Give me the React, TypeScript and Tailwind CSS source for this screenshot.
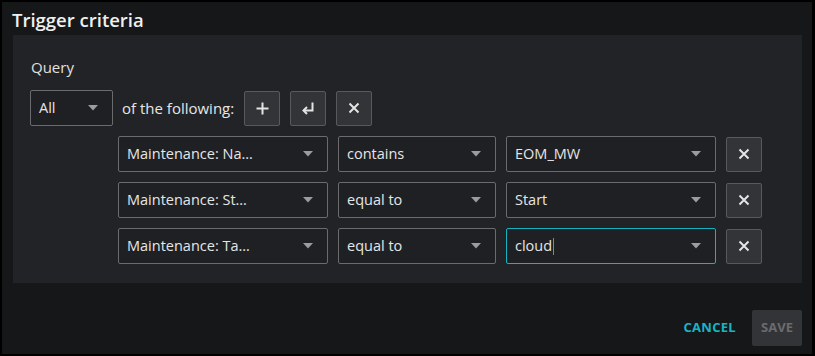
import React from "react";

const font = { fontFamily: '"Open Sans", "Noto Sans", sans-serif' };

function Caret() {
  return (
    <svg width="10" height="6" viewBox="0 0 10 6" className="shrink-0">
      <path d="M0 0 H10 L5 5.5 Z" fill="#9b9c9e" />
    </svg>
  );
}

function XIcon() {
  return (
    <svg width="12" height="12" viewBox="0 0 12 12">
      <path d="M1.5 1.5 L10.5 10.5 M10.5 1.5 L1.5 10.5" stroke="#e4e4e4" strokeWidth="2" strokeLinecap="butt" />
    </svg>
  );
}

function PlusIcon() {
  return (
    <svg width="13" height="13" viewBox="0 0 13 13">
      <path d="M6.5 0.5 V12.5 M0.5 6.5 H12.5" stroke="#e4e4e4" strokeWidth="2" />
    </svg>
  );
}

function ReturnIcon() {
  return (
    <svg width="14" height="13" viewBox="0 0 14 13">
      <path d="M11.5 0.5 V8.5 H3" stroke="#e4e4e4" strokeWidth="2" fill="none" />
      <path d="M6 5 L2.5 8.5 L6 12" stroke="#e4e4e4" strokeWidth="2" fill="none" />
    </svg>
  );
}

function Select({
  text,
  w,
  focus,
  cursor,
}: {
  text: string;
  w: string;
  focus?: boolean;
  cursor?: boolean;
}) {
  return (
    <div
      className={`${w} h-[36px] flex items-center justify-between pl-[8px] pr-[14px] rounded-[2px] border bg-[#1f2023] ${
        focus ? "border-[#14b3c4]" : "border-[#6a6b6d]"
      }`}
    >
      <span className="text-[14.5px] text-[#e6e6e6] flex items-center whitespace-nowrap">
        {text}
        {cursor && <span className="inline-block w-[1px] h-[17px] bg-[#14b3c4] ml-[1px]" />}
      </span>
      <Caret />
    </div>
  );
}

function IconButton({ children }: { children: React.ReactNode }) {
  return (
    <div className="w-[36px] h-[35px] flex items-center justify-center rounded-[2px] border border-[#58595b] bg-[#333437]">
      {children}
    </div>
  );
}

const rows = [
  { field: "Maintenance: Na…", op: "contains", val: "EOM_MW" },
  { field: "Maintenance: St…", op: "equal to", val: "Start" },
  { field: "Maintenance: Ta…", op: "equal to", val: "cloud", focus: true },
];

export default function App() {
  return (
    <div
      style={font}
      className="w-[815px] h-[356px] bg-[#161719] border-l-2 border-t-2 border-r-[3px] border-b-2 border-black flex flex-col"
    >
      <div className="pl-[10px] pt-[6px] h-[33px] text-[18.5px] leading-[24px] font-semibold text-[#f0f0f0]">
        Trigger criteria
      </div>
      <div className="ml-[11px] w-[789px] h-[248px] bg-[#222326] pl-[17px] pt-[22px]">
        <div className="text-[15px] leading-[21px] text-[#e0e0e0] pl-[1px]">Query</div>
        <div className="mt-[12px] flex items-center">
          <Select text="All" w="w-[83px]" />
          <span className="ml-[9px] text-[15px] text-[#e6e6e6] whitespace-nowrap">of the following:</span>
          <div className="ml-[10px] flex gap-[10px]">
            <IconButton>
              <PlusIcon />
            </IconButton>
            <IconButton>
              <ReturnIcon />
            </IconButton>
            <IconButton>
              <XIcon />
            </IconButton>
          </div>
        </div>
        <div className="mt-[10px] ml-[88px] flex flex-col gap-[10px]">
          {rows.map((r, i) => (
            <div key={i} className="flex items-center gap-[10px]">
              <Select text={r.field} w="w-[210px]" />
              <Select text={r.op} w="w-[158px]" />
              <Select text={r.val} w="w-[210px]" focus={r.focus} cursor={r.focus} />
              <IconButton>
                <XIcon />
              </IconButton>
            </div>
          ))}
        </div>
      </div>
      <div className="mt-[27px] flex items-center justify-end pr-[10px] gap-[16px]">
        <span className="text-[13px] font-bold tracking-[0.3px] text-[#18b4c6]">CANCEL</span>
        <div className="w-[50px] h-[36px] rounded-[2px] bg-[#333437] flex items-center justify-center text-[13px] font-bold text-[#6a6b6d]">
          SAVE
        </div>
      </div>
    </div>
  );
}
